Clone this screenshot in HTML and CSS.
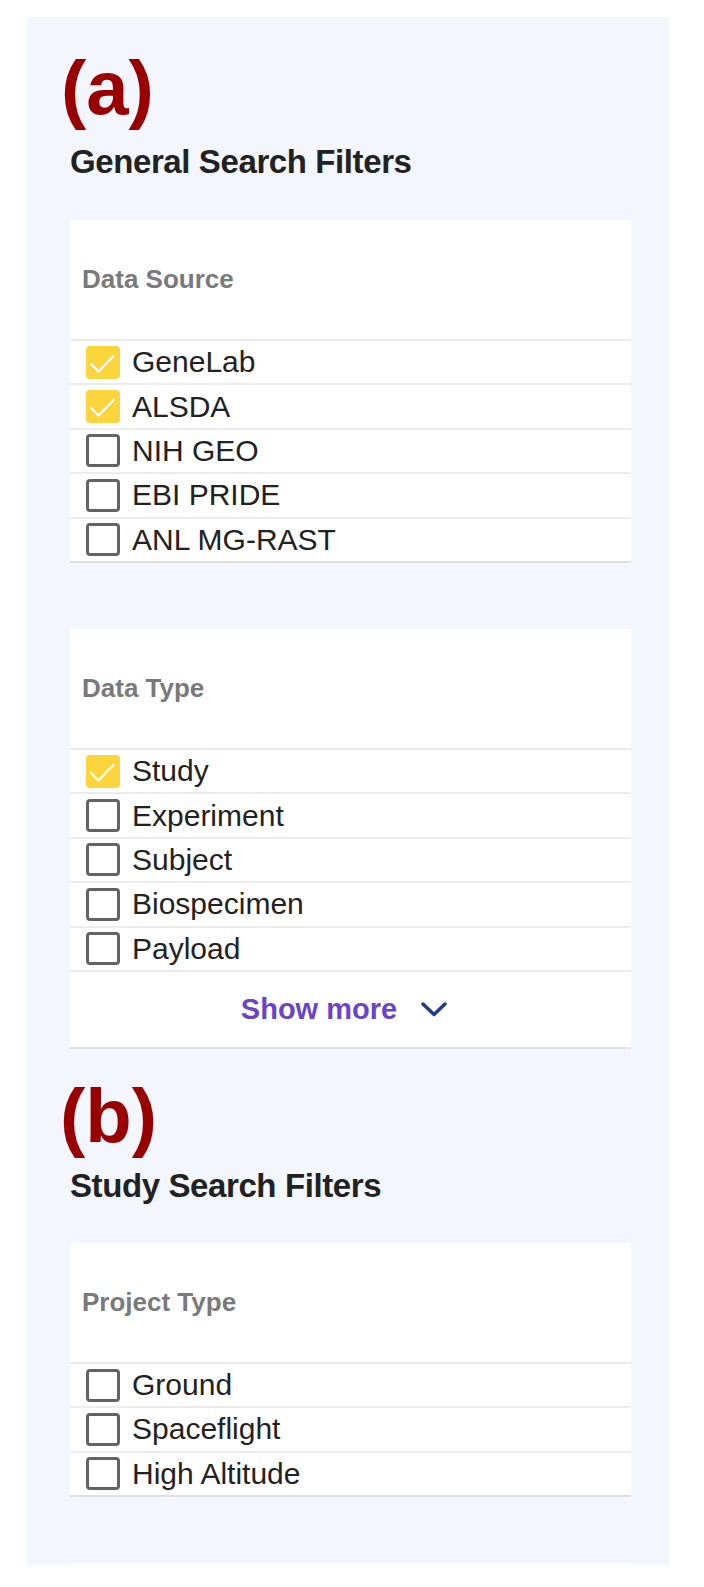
FILE: index.html
```html
<!DOCTYPE html>
<html lang="en">
<head>
<meta charset="utf-8">
<title>Search Filters</title>
<link rel="stylesheet" href="styles.css">
</head>
<body>
<div class="panel">
  <section class="group group-general">
    <div class="tag">(a)</div>
    <h2 class="group-title">General Search Filters</h2>

    <div class="card">
      <div class="card-head">Data Source</div>
      <ul class="opts">
        <li class="opt"><span class="box checked"><svg viewBox="0 0 33 33" width="33" height="33"><polyline points="5,18 12.5,25.5 27.5,10" /></svg></span><span class="opt-label">GeneLab</span></li>
        <li class="opt"><span class="box checked"><svg viewBox="0 0 33 33" width="33" height="33"><polyline points="5,18 12.5,25.5 27.5,10" /></svg></span><span class="opt-label">ALSDA</span></li>
        <li class="opt"><span class="box"></span><span class="opt-label">NIH GEO</span></li>
        <li class="opt"><span class="box"></span><span class="opt-label">EBI PRIDE</span></li>
        <li class="opt"><span class="box"></span><span class="opt-label">ANL MG-RAST</span></li>
      </ul>
    </div>

    <div class="card card-end">
      <div class="card-head">Data Type</div>
      <ul class="opts">
        <li class="opt"><span class="box checked"><svg viewBox="0 0 33 33" width="33" height="33"><polyline points="5,18 12.5,25.5 27.5,10" /></svg></span><span class="opt-label">Study</span></li>
        <li class="opt"><span class="box"></span><span class="opt-label">Experiment</span></li>
        <li class="opt"><span class="box"></span><span class="opt-label">Subject</span></li>
        <li class="opt"><span class="box"></span><span class="opt-label">Biospecimen</span></li>
        <li class="opt opt-inner"><span class="box"></span><span class="opt-label">Payload</span></li>
      </ul>
      <div class="more"><span>Show more</span><svg class="chev" viewBox="0 0 26 15" width="26" height="15"><polyline points="2,2 13,12.5 24,2" /></svg></div>
    </div>
  </section>

  <section class="group group-study">
    <div class="tag tag-b">(b)</div>
    <h2 class="group-title title-b">Study Search Filters</h2>

    <div class="card">
      <div class="card-head">Project Type</div>
      <ul class="opts">
        <li class="opt"><span class="box"></span><span class="opt-label">Ground</span></li>
        <li class="opt"><span class="box"></span><span class="opt-label">Spaceflight</span></li>
        <li class="opt"><span class="box"></span><span class="opt-label">High Altitude</span></li>
      </ul>
    </div>

    <div class="card card-peek"></div>
  </section>
</div>
</body>
</html>
```

FILE: styles.css
```css
* {
  box-sizing: border-box;
}

body {
  margin: 0;
  background: #ffffff;
  font-family: "Liberation Sans", Arial, Helvetica, sans-serif;
  color: #222222;
}

.panel {
  margin: 17px 0 0 27px;
  width: 642px;
  height: 1548px;
  overflow: hidden;
  background: #f3f6fd;
  padding: 33px 38px 0 43px;
}

.tag {
  margin: 0 0 16px -9px;
  font-size: 76px;
  line-height: 76px;
  font-weight: bold;
  color: #990000;
}

.tag-b {
  margin-bottom: 12px;
  margin-left: -10px;
}

.group-title {
  margin: 0 0 38px;
  font-size: 33px;
  line-height: 40px;
  font-weight: bold;
  letter-spacing: -0.4px;
  color: #222222;
}

.title-b {
  margin-bottom: 37px;
}

.card {
  background: #ffffff;
  margin-bottom: 66px;
}

.card-end {
  margin-bottom: 29px;
}

.card-peek {
  height: 100px;
}

.card-head {
  height: 121px;
  display: flex;
  align-items: center;
  padding-left: 12px;
  border-bottom: 2px solid #ebebeb;
  font-size: 26px;
  font-weight: bold;
  color: #7a7a7a;
}

.opts {
  list-style: none;
  margin: 0;
  padding: 0;
}

.opt {
  height: 44.4px;
  display: flex;
  align-items: center;
  gap: 12px;
  padding-left: 16px;
  border-bottom: 2px solid #ececec;
  font-size: 30px;
  color: #222222;
}

.opt:last-child {
  border-bottom-color: #e0e0e0;
}

.opt.opt-inner {
  border-bottom-color: #ececec;
}

.box {
  flex: none;
  width: 34px;
  height: 33px;
  border: 3px solid #636363;
  border-radius: 4px;
  background: #ffffff;
}

.box.checked {
  border: none;
  background: #fcd43c;
}

.box svg {
  display: block;
}

.box polyline {
  fill: none;
  stroke: #ffffff;
  stroke-width: 2.2;
  stroke-linecap: round;
  stroke-linejoin: round;
}

.more {
  height: 77px;
  display: flex;
  align-items: center;
  justify-content: center;
  gap: 24px;
  padding-right: 13px;
  border-bottom: 2px solid #e2e2e2;
  font-size: 29px;
  font-weight: bold;
  color: #6b43c9;
}

.chev {
  display: block;
}

.chev polyline {
  fill: none;
  stroke: #1d3c8f;
  stroke-width: 3.5;
  stroke-linecap: round;
  stroke-linejoin: round;
}
```
